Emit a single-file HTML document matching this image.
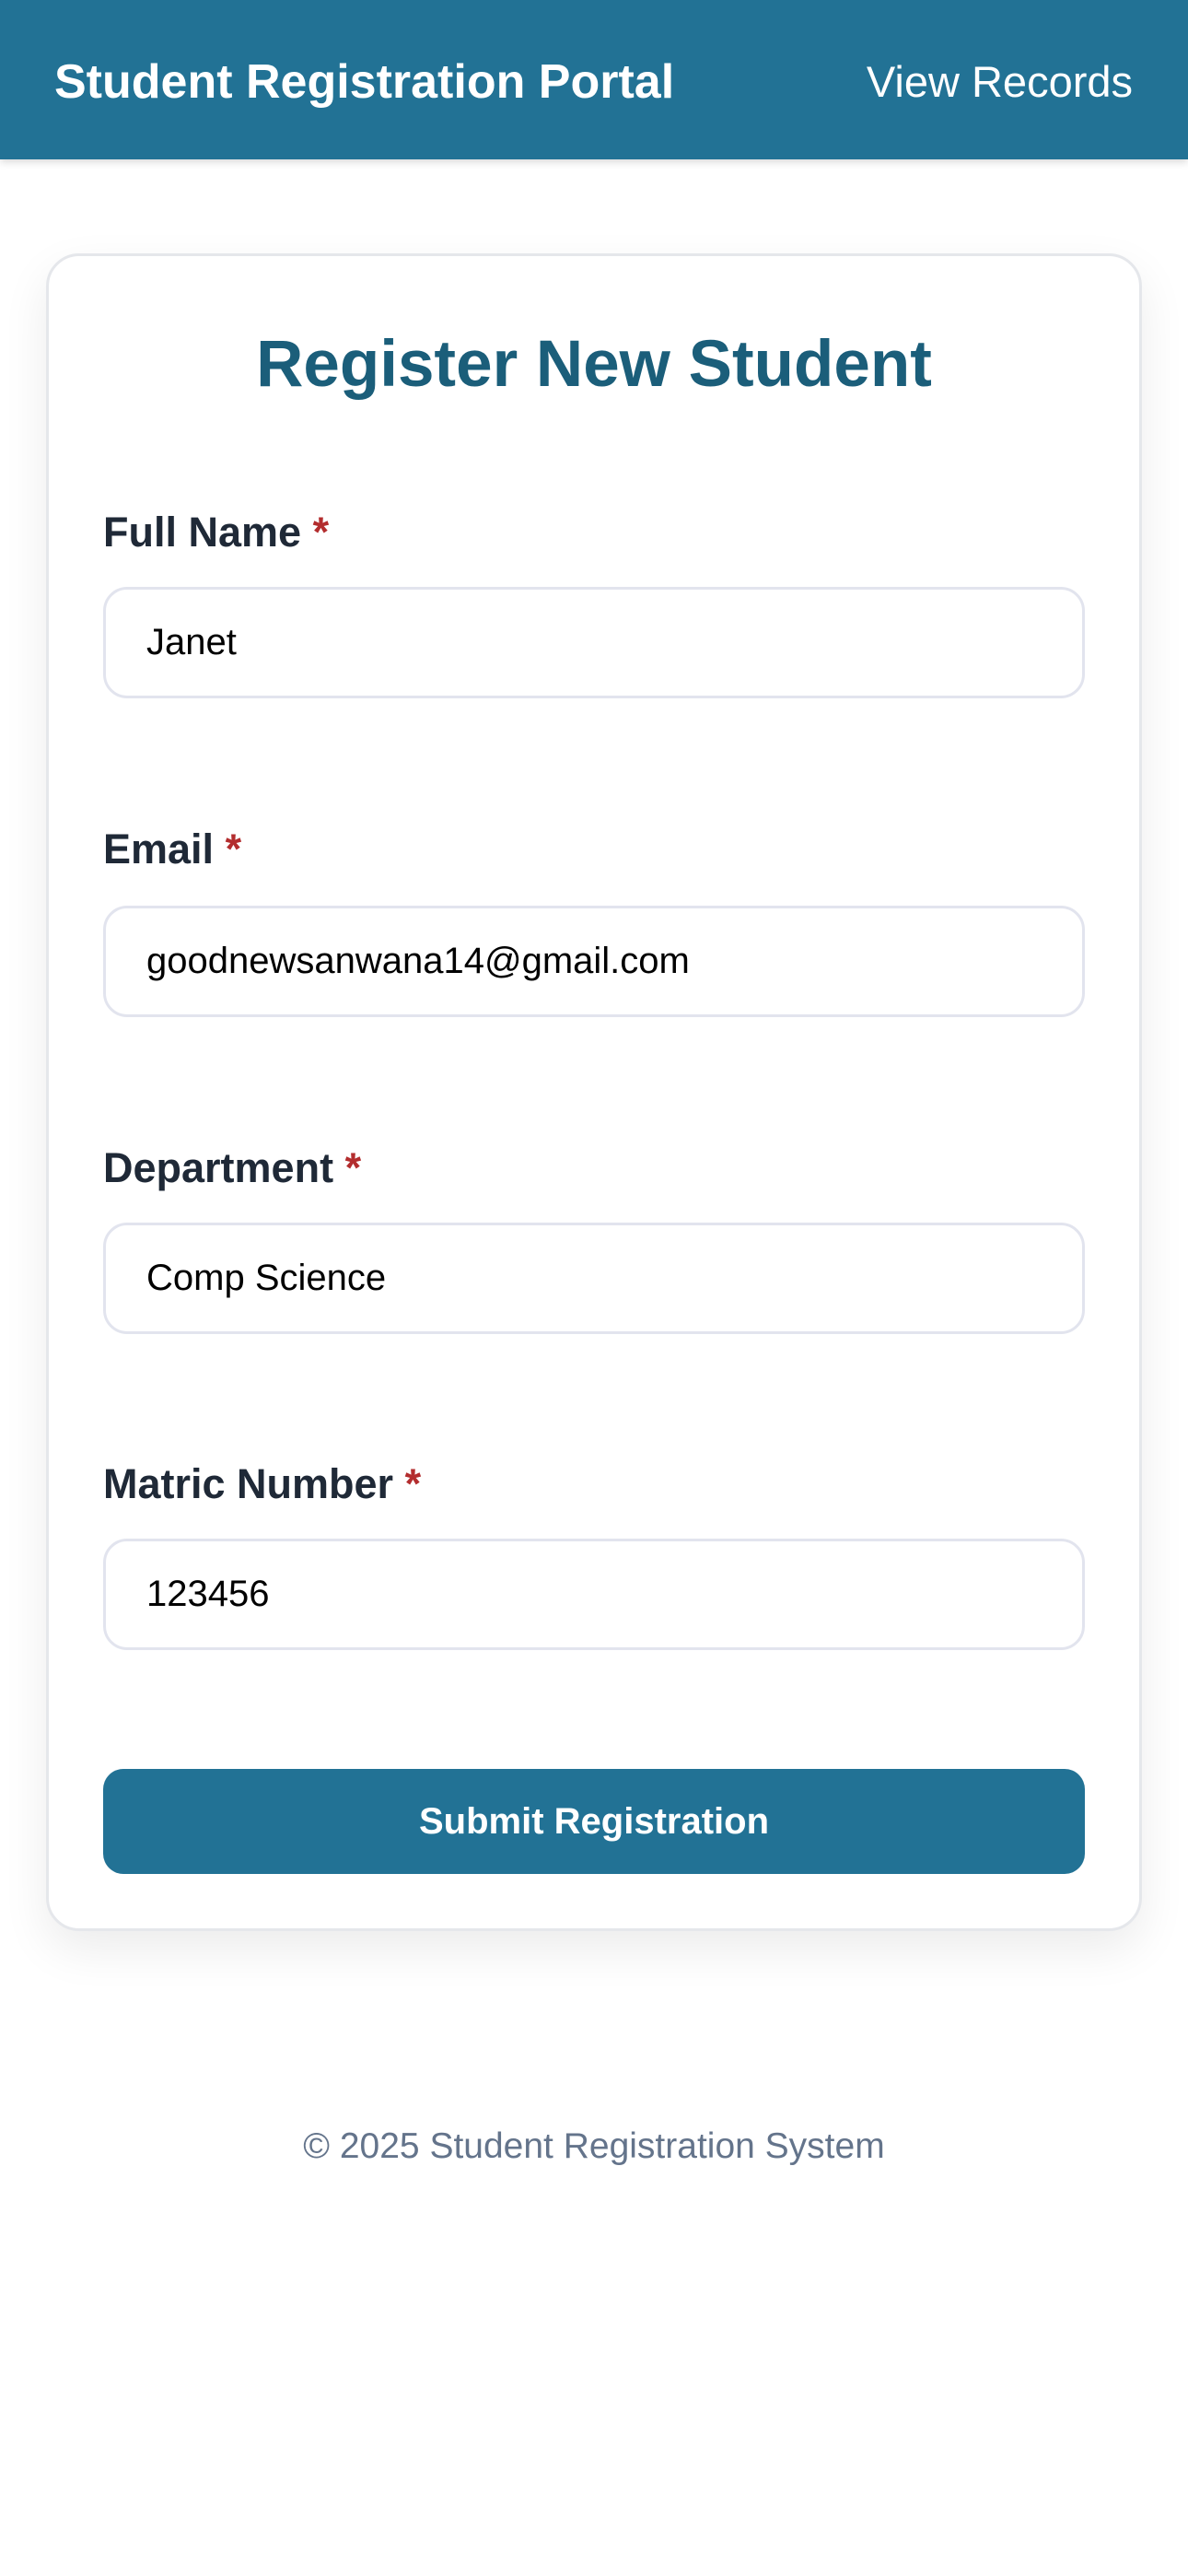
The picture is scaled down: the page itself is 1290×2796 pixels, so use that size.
<!DOCTYPE html>
<html><head><meta charset="utf-8"><style>
*{box-sizing:border-box;margin:0;padding:0}
body{width:1290px;height:2796px;background:#fff;font-family:"Liberation Sans",sans-serif;position:relative;overflow:hidden}
.hdr{position:absolute;left:0;top:0;width:1290px;height:173px;background:#227295;box-shadow:0 3px 8px rgba(0,0,0,.15)}
.hdr .t{position:absolute;left:59px;top:58px;font-size:52px;font-weight:bold;color:#fff;line-height:62px}
.hdr .v{position:absolute;right:60px;top:58px;font-size:47px;color:#fff;line-height:62px}
.card{position:absolute;left:50px;top:275px;width:1190px;height:1821px;border:3px solid #e5e7eb;border-radius:36px;background:#fff;box-shadow:0 20px 50px rgba(0,0,0,.08)}
h1{position:absolute;left:0;width:1290px;top:350px;text-align:center;font-size:71px;color:#1b5e7a;line-height:92px}
.lab{position:absolute;left:112px;font-size:45px;font-weight:bold;color:#1f2937;line-height:56px}
.lab span{color:#b32d2e}
.inp{position:absolute;left:112px;width:1066px;height:121px;border:3px solid #e2e4ee;border-radius:26px;font-size:40px;color:#000;padding-left:44px;line-height:115px}
.btn{position:absolute;left:112px;top:1920px;width:1066px;height:114px;background:#227295;border-radius:22px;color:#fff;font-weight:bold;font-size:40px;text-align:center;line-height:114px}
.ft{position:absolute;left:0;width:1290px;top:2306px;text-align:center;font-size:39px;color:#64748b;line-height:48px}
</style></head><body>
<div class="hdr"><div class="t">Student Registration Portal</div><div class="v">View Records</div></div>
<div class="card"></div>
<h1><b>Register New Student</b></h1>
<div class="lab" style="top:550px">Full Name <span>*</span></div>
<div class="inp" style="top:637px">Janet</div>
<div class="lab" style="top:894px">Email <span>*</span></div>
<div class="inp" style="top:983px">goodnewsanwana14@gmail.com</div>
<div class="lab" style="top:1240px">Department <span>*</span></div>
<div class="inp" style="top:1327px">Comp Science</div>
<div class="lab" style="top:1583px">Matric Number <span>*</span></div>
<div class="inp" style="top:1670px">123456</div>
<div class="btn">Submit Registration</div>
<div class="ft">© 2025 Student Registration System</div>
</body></html>
